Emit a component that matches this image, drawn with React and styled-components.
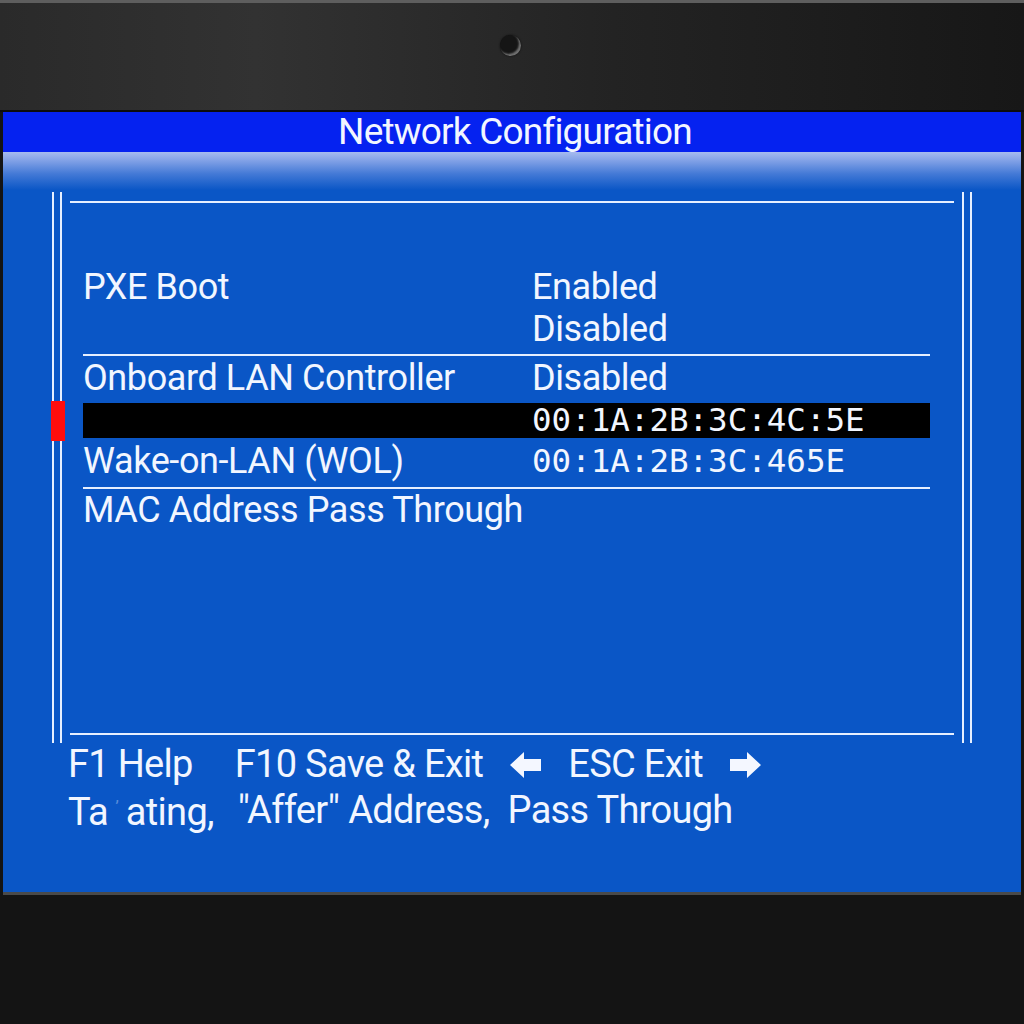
import React from "react";
import styled, { createGlobalStyle } from "styled-components";

const Global = createGlobalStyle`
  html, body { margin: 0; padding: 0; background: #141414; }
  body { width: 1024px; height: 1024px; overflow: hidden; font-family: Roboto, "Liberation Sans", sans-serif; }
`;

const Device = styled.div`
  width: 1024px;
  height: 1024px;
  display: flex;
  flex-direction: column;
  background: #141414;
`;

const TopBezel = styled.div`
  box-sizing: border-box;
  height: 112px;
  border-top: 3px solid #5e5e5e;
  border-bottom: 2px solid #0c0c0c;
  background: linear-gradient(90deg, #2a2a2a 0%, #323232 25%, #232323 60%, #171717 100%);
  display: flex;
  justify-content: center;
  align-items: flex-start;
  padding-top: 32px;
`;

const Camera = styled.div`
  width: 21px;
  height: 21px;
  margin-left: -4px;
  border-radius: 50%;
  background: #151515;
  box-shadow: inset -2px -2px 2px rgba(190, 190, 190, 0.55), 0 0 2px #0b0b0b;
`;

const Screen = styled.div`
  margin: 0 3px;
  height: 783px;
  box-sizing: border-box;
  border-bottom: 3px solid #4a4a4a;
  background: #0a56c6;
  display: flex;
  flex-direction: column;
  color: #f2f6ff;
`;

const TitleBar = styled.div`
  height: 40px;
  line-height: 40px;
  background: #0522f0;
  text-align: center;
  font-size: 37px;
  letter-spacing: -0.8px;
  padding-left: 6px;
`;

const Body = styled.div`
  flex: 1;
  padding: 40px 49px 0;
  background: linear-gradient(to bottom, #a6bbef 0px, #84a3e7 8px, #4379d6 22px, #0a56c6 38px);
  display: flex;
  flex-direction: column;
`;

const Frame = styled.div`
  height: 551px;
  display: flex;
  gap: 8px;
`;

const Rail = styled.div`
  position: relative;
  box-sizing: border-box;
  width: 10px;
  border-left: 2px solid #e6efff;
  border-right: 2px solid #e6efff;
`;

const Marker = styled.div`
  position: absolute;
  left: -3px;
  top: 209px;
  width: 14px;
  height: 40px;
  background: #ff0d0d;
`;

const Panel = styled.div`
  flex: 1;
  margin: 9px 0 8px;
  border-top: 2px solid #e6efff;
  border-bottom: 2px solid #e6efff;
  padding: 63px 24px 0 13px;
  display: flex;
  flex-direction: column;
`;

const Row = styled.div`
  display: grid;
  grid-template-columns: 449px 1fr;
  font-size: 36px;
  line-height: 42px;
  letter-spacing: -0.4px;
  margin-top: ${(p) => p.$mt || 0}px;
  background: ${(p) => (p.$selected ? "#000" : "transparent")};
  height: ${(p) => (p.$selected ? "35px" : "auto")};
`;

const Label = styled.div`
  white-space: nowrap;
`;

const Values = styled.div`
  display: flex;
  flex-direction: column;
`;

const Mono = styled.div`
  font-family: "DejaVu Sans Mono", "Liberation Mono", monospace;
  font-size: 32.5px;
  letter-spacing: 0;
  line-height: ${(p) => p.$lh || 42}px;
  white-space: nowrap;
`;

const Rule = styled.div`
  height: 2px;
  background: #e6efff;
  margin-top: ${(p) => p.$mt}px;
  margin-bottom: ${(p) => p.$mb || 0}px;
`;

const Footer = styled.div`
  margin-left: 16px;
  font-size: 38px;
  line-height: 43px;
  letter-spacing: -0.7px;
  white-space: nowrap;
`;

const KeyLine = styled.div`
  display: flex;
  align-items: center;
  gap: ${(p) => p.$gap}px;
`;

const Key = styled.span`
  margin-right: ${(p) => p.$mr || 0}px;
`;

const Faint = styled.span`
  display: inline-block;
  width: 18px;
  text-align: center;
  opacity: 0.35;
  font-size: 16px;
  vertical-align: 12px;
`;

const Arrow = ({ dir }) => (
  <svg width="33" height="28" viewBox="0 0 33 28" style={{ transform: dir === "right" ? "scaleX(-1)" : "none" }}>
    <polygon points="1,14 15,1 15,8 32,8 32,20 15,20 15,27" fill="#f4f7ff" />
  </svg>
);

export default function App() {
  return (
    <Device>
      <Global />
      <TopBezel>
        <Camera />
      </TopBezel>
      <Screen>
        <TitleBar>Network Configuration</TitleBar>
        <Body>
          <Frame>
            <Rail>
              <Marker />
            </Rail>
            <Panel>
              <Row>
                <Label>PXE Boot</Label>
                <Values>
                  <span>Enabled</span>
                  <span>Disabled</span>
                </Values>
              </Row>
              <Rule $mt={4} $mb={1} />
              <Row>
                <Label>Onboard LAN Controller</Label>
                <span>Disabled</span>
              </Row>
              <Row $mt={4} $selected>
                <Label />
                <Mono $lh={35}>00:1A:2B:3C:4C:5E</Mono>
              </Row>
              <Row $mt={2}>
                <Label>Wake-on-LAN (WOL)</Label>
                <Mono>00:1A:2B:3C:465E</Mono>
              </Row>
              <Rule $mt={5} />
              <Row>
                <Label>MAC Address Pass Through</Label>
              </Row>
            </Panel>
            <Rail />
          </Frame>
          <Footer>
            <KeyLine $gap={26}>
              <Key $mr={16}>F1 Help</Key>
              <Key>F10 Save &amp; Exit</Key>
              <Arrow dir="left" />
              <Key>ESC Exit</Key>
              <Arrow dir="right" />
            </KeyLine>
            <KeyLine $gap={0}>
              <Key $mr={24}>
                Ta<Faint>ʼ</Faint>ating,
              </Key>
              <Key $mr={9}>"Affer"</Key>
              <Key $mr={18}>Address,</Key>
              <Key>Pass Through</Key>
            </KeyLine>
          </Footer>
        </Body>
      </Screen>
    </Device>
  );
}
